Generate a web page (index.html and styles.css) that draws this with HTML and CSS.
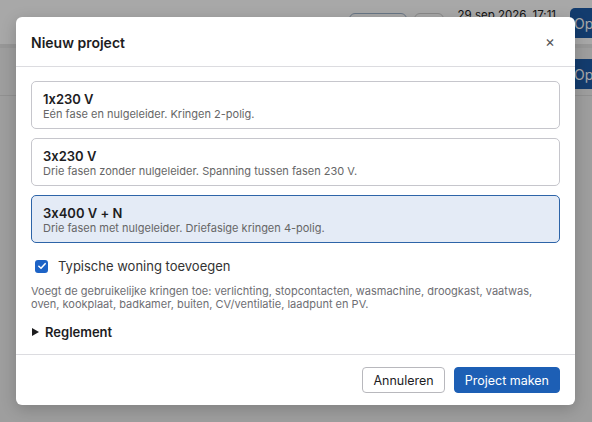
FILE: index.html
```html
<!DOCTYPE html>
<html lang="nl">
<head>
<meta charset="utf-8">
<title>Nieuw project</title>
<link rel="stylesheet" href="styles.css">
</head>
<body>
<div class="page">
  <header class="topbar">
    <div class="spacer"></div>
    <button class="ghost wide">Opslaan</button>
    <button class="ghost narrow">…</button>
    <span class="date">29 sep 2026, 17:11</span>
    <button class="blue">Op</button>
  </header>
  <div class="toolbar">
    <div class="spacer"></div>
    <button class="blue">Op</button>
  </div>
</div>
<div class="overlay">
  <div class="dialog" role="dialog" aria-labelledby="dlg-title">
    <div class="dialog-header">
      <h2 id="dlg-title" class="dialog-title">Nieuw project</h2>
      <span class="close">×</span>
    </div>
    <div class="dialog-body">
      <div class="options">
        <div class="option">
          <div class="option-title">1x230 V</div>
          <div class="option-desc">Eén fase en nulgeleider. Kringen 2-polig.</div>
        </div>
        <div class="option">
          <div class="option-title">3x230 V</div>
          <div class="option-desc">Drie fasen zonder nulgeleider. Spanning tussen fasen 230 V.</div>
        </div>
        <div class="option selected">
          <div class="option-title">3x400 V + N</div>
          <div class="option-desc">Drie fasen met nulgeleider. Driefasige kringen 4-polig.</div>
        </div>
      </div>
      <label class="check">
        <span class="box"><svg viewBox="0 0 12 12" width="10" height="10"><path d="M2.2 6.3 L4.8 8.8 L9.8 3.2" fill="none" stroke="#fff" stroke-width="1.8" stroke-linecap="round" stroke-linejoin="round"/></svg></span>
        <span>Typische woning toevoegen</span>
      </label>
      <p class="help">Voegt de gebruikelijke kringen toe: verlichting, stopcontacten, wasmachine, droogkast, vaatwas, oven, kookplaat, badkamer, buiten, CV/ventilatie, laadpunt en PV.</p>
      <div class="details"><span class="tri"></span>Reglement</div>
    </div>
    <div class="dialog-footer">
      <button class="btn">Annuleren</button>
      <button class="btn primary">Project maken</button>
    </div>
  </div>
</div>
</body>
</html>
```
FILE: styles.css
```css
* { box-sizing: border-box; }
html, body { margin: 0; padding: 0; }
body {
  width: 592px;
  height: 422px;
  overflow: hidden;
  font-family: Inter, "Liberation Sans", Arial, sans-serif;
  font-feature-settings: "calt" 0;
  background: #f0f0f0;
  color: #1d1d1f;
  position: relative;
}
button { font-feature-settings: "calt" 0; }
.page { width: 592px; height: 422px; }
.topbar {
  height: 48px;
  background: #ffffff;
  border-bottom: 4px solid #e6e6e6;
  display: flex;
  align-items: flex-start;
  padding-top: 8px;
}
.spacer { flex: 1; }
.topbar .ghost {
  height: 30px;
  margin-top: 5px;
  border: 1px solid #9fb3cc;
  background: #fff;
  border-radius: 6px;
  font: 13px Inter, "Liberation Sans", Arial, sans-serif;
  color: transparent;
}
.topbar .wide { width: 58px; margin-right: 7px; }
.topbar .narrow { width: 30px; border-color: #d0d0d0; margin-right: 14px; }
.date {
  font-size: 11.5px;
  color: #222;
  line-height: 14px;
  margin-right: 14px;
}
.blue {
  background: #1d5ba8;
  color: #fff;
  border: 0;
  border-radius: 5px 0 0 5px;
  height: 30px;
  width: 22px;
  padding: 0 0 0 4px;
  font: 14px Inter, "Liberation Sans", Arial, sans-serif;
  text-align: left;
  overflow: hidden;
  white-space: nowrap;
}
.toolbar {
  height: 48px;
  display: flex;
  align-items: flex-start;
  padding-top: 11px;
  border-bottom: 1px solid #dcdcdc;
}
.overlay {
  position: absolute;
  inset: 0;
  background: rgba(0, 0, 0, 0.34);
}
.dialog {
  position: absolute;
  left: 16px;
  top: 17px;
  width: 559px;
  background: #fff;
  border-radius: 6px;
  box-shadow: 0 4px 16px rgba(0, 0, 0, 0.2);
  display: flex;
  flex-direction: column;
}
.dialog-header {
  height: 50px;
  padding: 0 20px 0 15px;
  display: flex;
  align-items: center;
  justify-content: space-between;
  border-bottom: 1px solid #dcdce0;
}
.dialog-title {
  margin: 0;
  font-size: 14px;
  font-weight: 600;
  color: #1d1d1f;
  padding-top: 1px;
}
.close {
  font-size: 15px;
  color: #555;
  line-height: 1;
}
.dialog-body {
  padding: 14px 15px 14px 15px;
}
.options {
  display: flex;
  flex-direction: column;
  gap: 9px;
}
.option {
  border: 1px solid #c6c6cc;
  border-radius: 5px;
  padding: 9px 11px 7px;
  background: #fff;
}
.option.selected {
  background: #e4ebf6;
  border-color: #2d64a8;
}
.option-title {
  font-size: 13px;
  font-weight: 600;
  line-height: 16px;
  color: #1d1d1f;
}
.option-desc {
  font-size: 11px;
  line-height: 14px;
  color: #666;
}
.check {
  display: flex;
  align-items: center;
  gap: 10px;
  margin: 15px 0 0 4px;
  font-size: 13px;
  color: #333;
  line-height: 16px;
}
.box {
  width: 13px;
  height: 13px;
  border-radius: 3px;
  background: #1d63c6;
  display: flex;
  align-items: center;
  justify-content: center;
}
.help {
  margin: 11px 0 0;
  font-size: 11px;
  line-height: 13px;
  color: #6e6e73;
}
.details {
  margin-top: 13px;
  font-size: 13px;
  font-weight: 600;
  color: #1d1d1f;
  display: flex;
  align-items: center;
  gap: 6px;
  line-height: 16px;
}
.tri {
  width: 0;
  height: 0;
  border-left: 7px solid #1d1d1f;
  border-top: 4px solid transparent;
  border-bottom: 4px solid transparent;
  margin-left: 1px;
}
.dialog-footer {
  border-top: 1px solid #dcdce0;
  padding: 12px 15px 12px;
  display: flex;
  justify-content: flex-end;
  gap: 9px;
}
.btn {
  height: 26px;
  padding: 0 10px;
  border-radius: 4px;
  border: 1px solid #b8b8bd;
  background: #fff;
  color: #1d1d1f;
  font: 12.5px Inter, "Liberation Sans", Arial, sans-serif;
}
.btn.primary {
  background: #1d5fb5;
  border-color: #1d5fb5;
  color: #fff;
}
```
